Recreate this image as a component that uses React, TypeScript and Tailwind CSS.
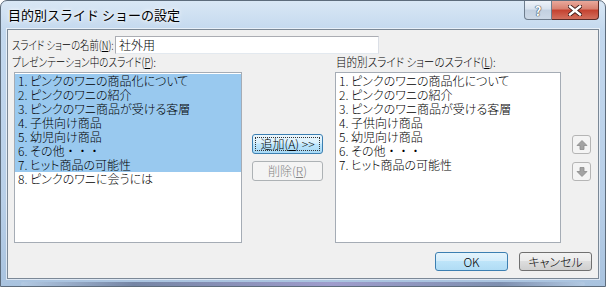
const uiFont = "font-['Noto_Sans_CJK_JP','Noto_Sans',sans-serif] [font-feature-settings:'palt']"

const presentationSlides = [
  "1. ピンクのワニの商品化について",
  "2. ピンクのワニの紹介",
  "3. ピンクのワニ商品が受ける客層",
  "4. 子供向け商品",
  "5. 幼児向け商品",
  "6. その他・・・",
  "7. ヒット商品の可能性",
  "8. ピンクのワニに会うには",
]

const customSlides = presentationSlides.slice(0, 7)

function Arrow({ down }: { down?: boolean }) {
  return (
    <svg width="12" height="12" viewBox="0 0 12 12" className={down ? "rotate-180" : ""}>
      <path d="M6 1.5 L11 6.5 H8 V10.5 H4 V6.5 H1 Z" fill="#a3a3a3" stroke="#8c8c8c" strokeWidth="0.8" />
    </svg>
  )
}

// the "・・・" keep full-width cells like the original dialog font
function ItemText({ text }: { text: string }) {
  const [head, tail] = text.split("・・・")
  if (tail === undefined) return <>{text}</>
  return (
    <>
      {head}
      <span className="[font-feature-settings:normal]">・・・</span>
      {tail}
    </>
  )
}

function ListBox({ items, selected }: { items: string[]; selected: number }) {
  return (
    <div className="h-[171px] border border-[#a5acb5] bg-white pt-px">
      {items.map((s, i) => (
        <div
          key={s}
          className={`h-[14px] pl-[3px] leading-[14px] whitespace-nowrap ${i < selected ? "bg-[#99c9ef]" : ""}`}
        >
          <ItemText text={s} />
        </div>
      ))}
    </div>
  )
}

export default function App() {
  return (
    <div className={`${uiFont} text-[12px] font-light text-black`}>
      <div className="flex h-[287px] w-[606px] flex-col overflow-hidden rounded-t-[7px] border border-[#5d6c7c] bg-[linear-gradient(180deg,#d9e7f5_0px,#c3d8ee_30px,#b8cfe8_200px,#a9c3df_100%)]">
        {/* title bar */}
        <div className="flex h-[28px] shrink-0 items-start pl-[7px] pr-[6px]">
          <div className="mt-[5px] flex-1 text-[13px] font-normal leading-[18px] [font-feature-settings:normal] [text-shadow:0_0_6px_#ffffff,0_0_3px_#ffffff]">
            目的別スライド ショーの設定
          </div>
          <div className="flex">
            <div className="flex h-[19px] w-[28px] items-center justify-center rounded-bl-[4px] border border-t-0 border-[#6e7d8d] bg-[linear-gradient(180deg,#eef3f9_0%,#d8e2ee_45%,#c2d0e0_50%,#cdd9e7_100%)]">
              <span className="text-[13px] font-bold leading-none text-white [text-shadow:0_0_1px_#394857,0_0_1px_#394857,0_0_1px_#394857]">?</span>
            </div>
            <div className="flex h-[19px] w-[47px] items-center justify-center rounded-br-[4px] border border-l-0 border-t-0 border-[#5a2b27] bg-[linear-gradient(180deg,#e9a99c_0%,#d7806f_45%,#c4412f_50%,#d2705e_100%)]">
              <svg width="14" height="11" viewBox="0 0 14 11">
                <path d="M2 1.5 L12 9.5 M12 1.5 L2 9.5" stroke="#3b1a17" strokeWidth="4.2" strokeLinecap="square" />
                <path d="M2 1.5 L12 9.5 M12 1.5 L2 9.5" stroke="#ffffff" strokeWidth="2.4" strokeLinecap="square" />
              </svg>
            </div>
          </div>
        </div>

        {/* client area */}
        <div className="mx-[6px] flex h-[250px] flex-col border border-[#7b8896] bg-[#f0f0f0] shadow-[0_0_0_1px_rgba(255,255,255,0.6)]">
          <div className="mt-[6px] flex h-[18px] items-center pl-[4px]">
            <div className="w-[103px] shrink-0 leading-[14px] whitespace-nowrap">
              <span className="inline-block origin-left scale-x-[0.78]">
                スライド ショーの名前(<span className="underline">N</span>):
              </span>
            </div>
            <div className="flex h-[18px] w-[264px] items-center border border-[#abadb3] border-b-[#e3e9ef] border-r-[#dbdfe6] bg-white pl-[3px] leading-[14px]">
              社外用
            </div>
          </div>

          <div className="flex pl-[6px]">
            <div className="flex w-[228px] flex-col">
              <div className="-ml-[2px] h-[16px] leading-[16px] whitespace-nowrap">
                <span className="inline-block origin-left scale-x-[0.8]">
                  プレゼンテーション中のスライド(<span className="underline">P</span>):
                </span>
              </div>
              <div className="mt-[2px]">
                <ListBox items={presentationSlides} selected={7} />
              </div>
            </div>

            <div className="ml-[10px] flex w-[71px] flex-col gap-[7px] pt-[80px]">
              <div className="flex h-[20px] items-center justify-center rounded-[3px] border border-[#3c7fb1] bg-[linear-gradient(180deg,#eaf6fd_0%,#d9f0fc_45%,#bee6fd_50%,#a7d9f5_100%)] p-[2px]">
                <div className="flex h-full w-full items-center justify-center border border-dotted border-[#333] leading-[14px]">
                  追加(<span className="underline">A</span>) &gt;&gt;
                </div>
              </div>
              <div className="flex h-[20px] items-center justify-center rounded-[3px] border border-[#adb2b5] bg-[#f4f4f4] leading-[14px] text-[#838383]">
                削除(<span className="underline">R</span>)
              </div>
            </div>

            <div className="ml-[12px] flex w-[226px] flex-col">
              <div className="ml-[1px] h-[16px] leading-[16px] whitespace-nowrap">
                <span className="inline-block origin-left scale-x-[0.88]">
                  目的別スライド ショーのスライド(<span className="underline">L</span>):
                </span>
              </div>
              <div className="mt-[2px]">
                <ListBox items={customSlides} selected={0} />
              </div>
            </div>

            <div className="ml-[11px] flex w-[19px] flex-col gap-[8px] pt-[81px]">
              <div className="flex h-[19px] items-center justify-center rounded-[3px] border border-[#b5b5b5] bg-[#f4f4f4]">
                <Arrow />
              </div>
              <div className="flex h-[19px] items-center justify-center rounded-[3px] border border-[#b5b5b5] bg-[#f4f4f4]">
                <Arrow down />
              </div>
            </div>
          </div>

          <div className="mt-[9px] flex justify-end gap-[11px] pr-[6px]">
            <div className="flex h-[19px] w-[73px] items-center justify-center rounded-[3px] border border-[#3c7fb1] bg-[linear-gradient(180deg,#e5f4fc_0%,#d4edfb_45%,#bde4f9_50%,#b0dcf5_100%)] leading-[14px]">
              OK
            </div>
            <div className="flex h-[19px] w-[73px] items-center justify-center rounded-[3px] border border-[#707070] bg-[linear-gradient(180deg,#f2f2f2_0%,#ebebeb_45%,#dddddd_50%,#cfcfcf_100%)] leading-[14px]">
              キャンセル
            </div>
          </div>
        </div>

        <div className="mx-[20px] mt-[3px] h-[4px] rounded-full bg-[linear-gradient(90deg,#b6cce4_0%,#5f6b8c_20%,#9a8cc4_55%,#6c7a9c_85%,#b6cce4_100%)] opacity-70" />
      </div>
    </div>
  )
}
